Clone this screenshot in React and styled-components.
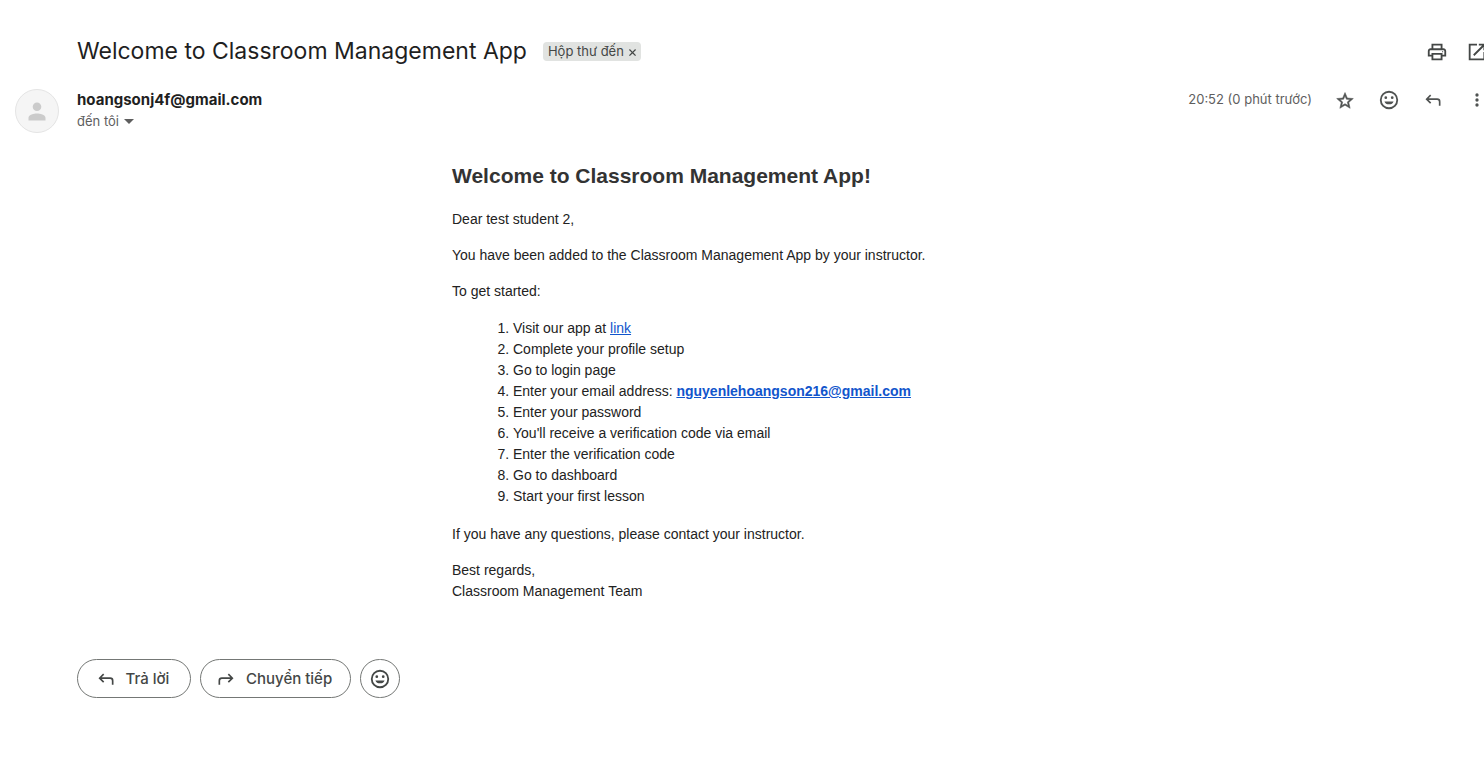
import React from "react";
import styled, { createGlobalStyle, css } from "styled-components";

const ui = '"Inter", "Roboto", sans-serif';

const GlobalStyle = createGlobalStyle`
  * { box-sizing: border-box; }
  body { margin: 0; background: #fff; color: #1f1f1f; font-family: ${ui}; overflow-x: hidden; }
`;

const Page = styled.main`
  overflow: hidden;
  padding: 32px 0 64px;
`;

/* The message pane runs slightly under the right edge of the window. */
const Pane = styled.div`
  margin-right: -15px;
`;

const SubjectRow = styled.header`
  display: flex;
  align-items: center;
  height: 40px;
  padding: 0 2px 0 77px;
`;

const SubjectGroup = styled.div`
  display: flex;
  flex: 1;
  align-items: center;
  gap: 16px;
  padding-bottom: 2px;
`;

const Subject = styled.h1`
  margin: 0;
  font-size: 23px;
  font-weight: 400;
  line-height: 32px;
  white-space: nowrap;
`;

const Label = styled.span`
  display: flex;
  align-items: center;
  gap: 5px;
  height: 19px;
  padding: 0 5px;
  border-radius: 4px;
  background: #e1e3e1;
  color: #444746;
  font-size: 13px;
  line-height: 19px;
  white-space: nowrap;
`;

const LabelRemove = styled.button`
  display: flex;
  padding: 2px 0 0;
  border: 0;
  background: none;
  color: inherit;
`;

const IconButton = styled.button`
  display: flex;
  flex: none;
  align-items: center;
  justify-content: center;
  width: ${(p) => (p.$wide ? 44 : 40)}px;
  height: 40px;
  padding: 0;
  border: 0;
  background: none;
  color: ${(p) => (p.$wide ? "#505352" : "#444746")};
`;

const MetaRow = styled.div`
  display: flex;
  align-items: flex-start;
  padding: 8px 0 0 15px;
`;

const Avatar = styled.div`
  display: flex;
  flex: none;
  width: 44px;
  height: 44px;
  margin: 9px 18px 0 0;
  border: 1px solid #e4e4e4;
  border-radius: 50%;
  background: #f5f5f5;
  color: #cbcbcb;
`;

const Sender = styled.div`
  flex: 1;
  padding-top: 9px;
`;

const SenderName = styled.div`
  font-size: 15px;
  font-weight: 700;
  line-height: 22px;
`;

const Recipient = styled.button`
  display: flex;
  align-items: center;
  gap: 5px;
  padding: 0;
  border: 0;
  background: none;
  color: #5e5e5e;
  font-family: inherit;
  font-size: 13px;
  line-height: 20px;
`;

const Time = styled.time`
  margin-right: 11px;
  color: #5e5e5e;
  font-size: 13px;
  line-height: 38px;
  white-space: nowrap;
`;

const Body = styled.article`
  max-width: 624px;
  margin: 27px auto 0;
  padding: 0 22px;
  font-family: "Liberation Sans", Arial, sans-serif;
  font-size: 14px;
  line-height: 21px;
  color: #222;
`;

const Heading = styled.h2`
  margin: 0 0 17px;
  color: #333;
  font-size: 21px;
  line-height: 32px;
`;

const Paragraph = styled.p`
  margin: 0 0 15px;
`;

const Steps = styled.ol`
  margin: 16px 0 17px;
  padding-left: 61px;
`;

const Link = styled.a`
  color: #1155cc;
  font-weight: ${(p) => (p.$strong ? 700 : 400)};
`;

const Actions = styled.footer`
  display: flex;
  gap: 9px;
  margin-top: 57px;
  padding-left: 77px;
`;

const ActionButton = styled.button`
  display: flex;
  align-items: center;
  justify-content: center;
  gap: 10px;
  height: 39px;
  border: 1px solid #747775;
  border-radius: 20px;
  background: #fff;
  color: #444746;
  font-family: inherit;
  font-size: 15px;
  font-weight: 500;
  ${(p) => (p.$round ? css`width: 40px; padding: 0;` : css`min-width: 114px; padding: 0 18px 0 15px;`)}
`;

const Icon = ({ d, size = 20, box = 24, stroke }) => (
  <svg width={size} height={size} viewBox={`0 0 ${box} ${box}`} fill="currentColor" stroke={stroke ? "currentColor" : "none"} strokeWidth={stroke} aria-hidden="true">
    <path d={d} />
  </svg>
);

const icons = {
  print: "M19 8h-1V3H6v5H5c-1.66 0-3 1.34-3 3v6h4v4h12v-4h4v-6c0-1.66-1.34-3-3-3zM8 5h8v3H8V5zm8 12v2H8v-4h8v2zm2-2v-2H6v2H4v-4c0-.55.45-1 1-1h14c.55 0 1 .45 1 1v4h-2zM17.500 11.200h1.200v1.200h-1.200z",
  open: "M19 19H5V5h7V3H3v18h18v-9h-2v7zM14 3v2h3.59l-9.83 9.83 1.41 1.41L19 6.41V10h2V3h-7z",
  star: "M22 10.240l-7.190-.62L12 3 9.190 9.630 2 10.240l5.460 4.730L5.820 22 12 18.270 18.180 22l-1.630-7.030L22 10.240zM12 16.400l-3.760 2.270 1-4.280-3.320-2.880 4.380-.38L12 7.100l1.710 4.040 4.380.38-3.320 2.880 1 4.280L12 16.400z",
  smile: "M12 2a10 10 0 1 0 0 20 10 10 0 0 0 0-20zm0 18a8 8 0 1 1 0-16 8 8 0 0 1 0 16zM8.500 8a1.500 1.500 0 1 0 0 3 1.500 1.500 0 0 0 0-3zm7 0a1.500 1.500 0 1 0 0 3 1.500 1.500 0 0 0 0-3zM7 13.500a5.200 4.500 0 0 0 10 0z",
  reply: "M8.500 5.500 3 11l5.500 5.500 1.400-1.400L6.800 12H17a2 2 0 0 1 2 2v5h2v-5a4 4 0 0 0-4-4H6.800l3.100-3.100z",
  forward: "M15.500 5.500 21 11l-5.500 5.500-1.400-1.400 3.100-3.100H7a2 2 0 0 0-2 2v5H3v-5a4 4 0 0 1 4-4h10.200l-3.100-3.100z",
  more: "M12 8a2 2 0 1 0 0-4 2 2 0 0 0 0 4zm0 2a2 2 0 1 0 0 4 2 2 0 0 0 0-4zm0 6a2 2 0 1 0 0 4 2 2 0 0 0 0-4z",
  person: "M21 21a4.300 4.300 0 1 0 0-8.600 4.300 4.300 0 0 0 0 8.600zM12.500 30.500v-2.700c0-3 5.700-4.300 8.500-4.300s8.500 1.300 8.500 4.300v2.700z",
  caret: "M0 0h10L5 5z",
  close: "M1 0 4 3 7 0 8 1 5 4 8 7 7 8 4 5 1 8 0 7 3 4 0 1z",
};

export default function App() {
  return (
    <Page>
      <GlobalStyle />
      <Pane>
        <SubjectRow>
          <SubjectGroup>
            <Subject>Welcome to Classroom Management App</Subject>
            <Label>
              Hộp thư đến
              <LabelRemove aria-label="Xóa nhãn"><Icon d={icons.close} size={7} box={8} /></LabelRemove>
            </Label>
          </SubjectGroup>
          <IconButton aria-label="In"><Icon d={icons.print} size={22} /></IconButton>
          <IconButton aria-label="Mở trong cửa sổ mới"><Icon d={icons.open} size={22} /></IconButton>
        </SubjectRow>
        <MetaRow>
          <Avatar><Icon d={icons.person} size={42} box={42} /></Avatar>
          <Sender>
            <SenderName>hoangsonj4f@gmail.com</SenderName>
            <Recipient>
              đến tôi
              <svg width="10" height="5" viewBox="0 0 10 5" fill="currentColor" aria-hidden="true"><path d={icons.caret} /></svg>
            </Recipient>
          </Sender>
          <Time>20:52 (0 phút trước)</Time>
          <IconButton $wide aria-label="Gắn dấu sao"><Icon d={icons.star} stroke={0.6} /></IconButton>
          <IconButton $wide aria-label="Thêm biểu tượng cảm xúc"><Icon d={icons.smile} size={22} /></IconButton>
          <IconButton $wide aria-label="Trả lời"><Icon d={icons.reply} /></IconButton>
          <IconButton $wide aria-label="Khác"><Icon d={icons.more} /></IconButton>
        </MetaRow>
      </Pane>
      <Body>
        <Heading>Welcome to Classroom Management App!</Heading>
        <Paragraph>Dear test student 2,</Paragraph>
        <Paragraph>You have been added to the Classroom Management App by your instructor.</Paragraph>
        <Paragraph>To get started:</Paragraph>
        <Steps>
          <li>Visit our app at <Link href="#app">link</Link></li>
          <li>Complete your profile setup</li>
          <li>Go to login page</li>
          <li>Enter your email address: <Link $strong href="mailto:nguyenlehoangson216@gmail.com">nguyenlehoangson216@gmail.com</Link></li>
          <li>Enter your password</li>
          <li>You'll receive a verification code via email</li>
          <li>Enter the verification code</li>
          <li>Go to dashboard</li>
          <li>Start your first lesson</li>
        </Steps>
        <Paragraph>If you have any questions, please contact your instructor.</Paragraph>
        <Paragraph>Best regards,<br />Classroom Management Team</Paragraph>
      </Body>
      <Actions>
        <ActionButton><Icon d={icons.reply} />Trả lời</ActionButton>
        <ActionButton><Icon d={icons.forward} />Chuyển tiếp</ActionButton>
        <ActionButton $round aria-label="Thêm biểu tượng cảm xúc"><Icon d={icons.smile} size={22} /></ActionButton>
      </Actions>
    </Page>
  );
}
